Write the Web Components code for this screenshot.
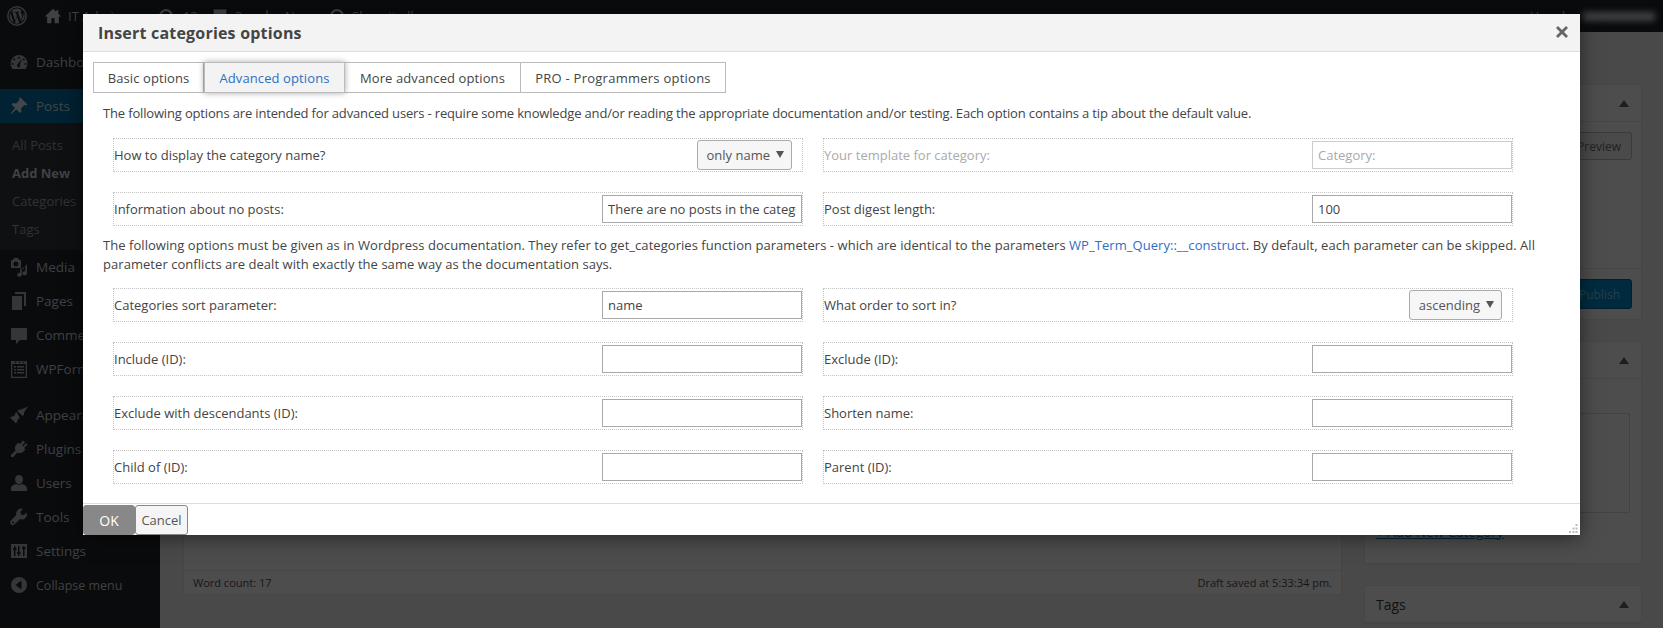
<!DOCTYPE html>
<html>
<head>
<meta charset="utf-8">
<title>Insert categories options</title>
<style>
  html, body { margin: 0; height: 100%; background: #494949; overflow: hidden; }
  body { font: 13px "Open Sans", sans-serif; position: relative; width: 1663px; height: 628px; }
</style>
</head>
<body>
<wp-page></wp-page>
<cat-dialog></cat-dialog>

<script>
const ICONS = {
    wp: '<circle cx="10" cy="10" r="9.2" fill="none" stroke="currentColor" stroke-width="1.5"/><path d="M2.6 10a7.4 7.4 0 0 0 4.2 6.7L3.3 7A7.4 7.4 0 0 0 2.6 10zM15 9.6c0-.9-.3-1.6-.6-2.1-.4-.6-.7-1.1-.7-1.7 0-.7.5-1.3 1.2-1.3h.1A7.4 7.4 0 0 0 3.8 5.9h.5c.8 0 2-.1 2-.1.4 0 .4.6 0 .6 0 0-.4.1-.9.1l2.8 8.4 1.7-5.1-1.2-3.3c-.4 0-.8-.1-.8-.1-.4 0-.4-.6 0-.6 0 0 1.300.1 2 .1.800 0 2-.1 2-.1.400 0 .4.600 0 .600 0 0-.4.100-.9.100l2.800 8.300.8-2.600c.3-1.100.6-1.900.6-2.600zM10.100 10.600l-2.300 6.700a7.400 7.400 0 0 0 4.500-.1l-.1-.1zM16.700 6.200c0 .3.100.6.100 1 0 .7-.1 1.500-.6 2.600l-2.200 6.500a7.400 7.400 0 0 0 2.700-10.100z" fill="currentColor"/>',
    home: '<path d="M10 2 1 10.500h2.500V18h4.700v-5.500h3.600V18h4.700v-7.500H19L16 7.600V3.500h-2.500v1.700z" fill="currentColor"/>',
    ring: '<circle cx="10" cy="10" r="6.500" fill="none" stroke="currentColor" stroke-width="2.500"/>',
    block: '<rect x="2" y="2" width="16" height="14" rx="1" fill="currentColor"/>',
    plus: '<path d="M9 2h2v7h7v2h-7v7H9v-7H2V9h7z" fill="currentColor"/>',
    gauge: '<path d="M10 3a8.500 8.500 0 0 0-8.500 8.500c0 2.100.8 4.100 2.100 5.500h12.800a8.500 8.500 0 0 0 2.100-5.500A8.500 8.500 0 0 0 10 3zm0 1.800a1 1 0 1 1 0 2 1 1 0 0 1 0-2zM5.200 6.500a1 1 0 1 1 0 2 1 1 0 0 1 0-2zM3.500 11a1 1 0 1 1 0 2 1 1 0 0 1 0-2zm13 0a1 1 0 1 1 0 2 1 1 0 0 1 0-2zm-1.700-4.500a1 1 0 1 1 0 2 1 1 0 0 1 0-2zM10 15.500a2 2 0 0 1-1-3.700l4-5-2.200 5.800a2 2 0 0 1-.800 2.900z" fill="currentColor" fill-rule="evenodd"/>',
    pin: '<path d="M11.500 1.500 18.500 8.500l-1.500 1-1.500-.5-3.500 3.500.5 3-1.500 1.500-3.500-3.500L2 18l-.5-.5 4.500-5.500L2.500 8.500 4 7l3 .5L10.500 4 10 2.500z" fill="currentColor"/>',
    media: '<path d="M2 3h2l1-2h4l1 2h2v8H2zm5 1.500a2.500 2.500 0 1 0 0 5 2.500 2.500 0 0 0 0-5zM18 7v9.200a2.300 2 0 1 1-1.700-1.900V10l-3.500 1v6.700a2.300 2 0 1 1-1.700-1.900V12h3z" fill="currentColor" fill-rule="evenodd"/>',
    pages: '<path d="M6 1h11v14h-2V3H6zM3 5h10v14H3z" fill="currentColor"/>',
    comment: '<path d="M3 3h14a1 1 0 0 1 1 1v10a1 1 0 0 1-1 1h-6l-4 4v-4H3a1 1 0 0 1-1-1V4a1 1 0 0 1 1-1z" fill="currentColor"/>',
    forms: '<path d="M2 2h16v17H2zm1.300 3v12.700h13.400V5zM5 7h2v1.500H5zm3 0h7v1.500H8zM5 10h2v1.500H5zm3 0h7v1.500H8zm-3 3h2v1.500H5zm3 0h7v1.500H8zM5 2.800l1.500 1.500L8 2.800zm4 0 1.500 1.500L12 2.800zm4 0 1.500 1.500L16 2.800z" fill="currentColor" fill-rule="evenodd"/>',
    brush: '<path d="M19 1.500 12 4.500l-2 0-1.500 1.500 5 5 1.500-1.500V7.500zM7.500 7 6 8.500c.500 1 0 1.800-1 2.200L1 12.500 7 18.500l2-4c.4-1 1.200-1.500 2.200-1z" fill="currentColor"/>',
    plug: '<path d="M14 1.500 16 3 13 6.500l1 1 3-3.500L18.500 5.500 15 9l1.500 1.500-2 2c-2 2-4.500 2-6 1L5 17l-.5 1H2v-2.500l1-.5 3.500-3.500c-1-1.500-1-4 1-6l2-2L11 5z" fill="currentColor"/>',
    user: '<path d="M10 2a4 4.500 0 1 1 0 9 4 4.500 0 0 1 0-9zM2 18v-2.500C2 13 5 11.500 7 11c1.500 1 4.500 1 6 0 2 .5 5 2 5 4.500V18z" fill="currentColor"/>',
    wrench: '<path d="M17.500 5.500 14.800 8.200 12 7.500 11.300 4.800 14 2a5 5 0 0 0-6.700 6L2 13.500a2.500 2.500 0 0 0 3.500 3.800L11 12a5 5 0 0 0 6.500-6.500zM4 16.500a1 1 0 1 1 0-2 1 1 0 0 1 0 2z" fill="currentColor" fill-rule="evenodd"/>',
    sliders: '<path d="M2 3h16v14H2zm3 2v2H4v2h1v6h1.500V9h1V7h-1V5zm4 0v6H8v2h1v2h1.500v-2h1v-2h-1V5zm5 0v1h-1v2h1v7h1.500V8h1V6h-1V5z" fill="currentColor" fill-rule="evenodd"/>',
    collapse: '<path d="M10 2a8 8 0 1 1 0 16 8 8 0 0 1 0-16zm2.500 3.500L6.500 10l6 4.500z" fill="currentColor" fill-rule="evenodd"/>'
};
const icon = (name, size = 20) => `<svg width="${size}" height="${size}" viewBox="0 0 20 20">${ICONS[name]}</svg>`;

class WpSideItem extends HTMLElement {
    connectedCallback() {
        this.attachShadow({ mode: 'open' }).innerHTML = `
            <style>
                :host { display: flex; align-items: center; height: 34px; color: #3f4245; font-size: 13.500px; }
                :host([active]) { background: #002233; color: #42474a; }
                :host([small]) { font-size: 12.500px; }
                .ic { width: 36px; padding-left: 9px; box-sizing: border-box; display: flex; color: #34373a; }
                :host([active]) .ic { color: #42474a; }
            </style>
            <span class="ic">${icon(this.getAttribute('icon'))}</span><slot></slot>`;
    }
}
customElements.define('wp-side-item', WpSideItem);

class WpSidebar extends HTMLElement {
    connectedCallback() {
        this.attachShadow({ mode: 'open' }).innerHTML = `
            <style>
                :host { display: block; width: 160px; flex: none; background: #0a0b0d; padding-top: 13px; box-sizing: border-box; }
                .sub { background: #0f1012; padding: 8px 0 0 12px; color: #303336; font-size: 13px; line-height: 28px; height: 127px; box-sizing: border-box; }
                .sub b { color: #3f4245; font-weight: 700; }
                .sep { height: 12px; }
            </style>
            <wp-side-item icon="gauge">Dashboard</wp-side-item>
            <div style="height:10px"></div>
            <wp-side-item icon="pin" active>Posts</wp-side-item>
            <div class="sub">All Posts<br><b>Add New</b><br>Categories<br>Tags</div>
            <wp-side-item icon="media">Media</wp-side-item>
            <wp-side-item icon="pages">Pages</wp-side-item>
            <wp-side-item icon="comment">Comments</wp-side-item>
            <wp-side-item icon="forms">WPForms</wp-side-item>
            <div class="sep"></div>
            <wp-side-item icon="brush">Appearance</wp-side-item>
            <wp-side-item icon="plug">Plugins</wp-side-item>
            <wp-side-item icon="user">Users</wp-side-item>
            <wp-side-item icon="wrench">Tools</wp-side-item>
            <wp-side-item icon="sliders">Settings</wp-side-item>
            <wp-side-item icon="collapse" small>Collapse menu</wp-side-item>`;
    }
}
customElements.define('wp-sidebar', WpSidebar);

class WpPanel extends HTMLElement {
    connectedCallback() {
        this.attachShadow({ mode: 'open' }).innerHTML = `
            <style>
                :host { display: block; background: #4d4d4d; border: 1px solid #464646; margin-bottom: 21px; box-sizing: border-box; color: #0c0c0c; }
                .head { height: 36px; border-bottom: 1px solid #464646; display: flex; align-items: center; justify-content: space-between; padding: 0 12px 0 11px; font-size: 14px; color: #111; }
                .head i { width: 0; height: 0; border: 5px solid transparent; border-bottom: 7px solid #1c1f22; border-top: 0; }
            </style>
            <div class="head"><span>${this.getAttribute('heading') || ''}</span><i></i></div>
            <slot></slot>`;
    }
}
customElements.define('wp-panel', WpPanel);

class WpPage extends HTMLElement {
    connectedCallback() {
        this.attachShadow({ mode: 'open' }).innerHTML = `
            <style>
                :host { display: flex; flex-direction: column; width: 1663px; height: 628px; overflow: hidden; }
                .bar { height: 32px; flex: none; background: #0a0b0d; color: #3f4245; display: flex; align-items: center; font-size: 13px; }
                .bar svg { display: block; }
                .bar > * { flex: none; }
                .slot { display: flex; align-items: center; }
                .howdy { margin-left: auto; margin-right: 8px; display: flex; align-items: center; }
                .blur { width: 72px; height: 9px; background: #3f4245; filter: blur(3px); margin-left: 8px; }
                .body { flex: 1; display: flex; min-height: 0; }
                .main { flex: 1; display: flex; padding: 52px 21px 0 23px; gap: 22px; align-items: flex-start; }
                .editor { flex: 1; height: 511px; border: 1px solid #464646; box-sizing: border-box; display: flex; flex-direction: column; justify-content: flex-end; background: #4d4d4d; }
                .status { height: 23px; border-top: 1px solid #464646; display: flex; justify-content: space-between; align-items: center; padding: 0 9px; font-size: 11px; color: #161616; }
                .side { width: 278px; flex: none; }
                .pub { height: 236px; position: relative; }
                .pubfoot { position: absolute; left: 0; right: 0; top: 183px; border-top: 1px solid #464646; }
                .btn { position: absolute; right: 9px; font-size: 12px; border-radius: 3px; height: 28px; box-sizing: border-box; padding: 0 10px; display: flex; align-items: center; border: 1px solid #3a3a3a; }
                .preview { top: 47px; color: #222; background: #4a4a4a; }
                .publish { top: 194px; height: 30px; color: #27404c; background: #002b3f; border-color: #001f2d; padding: 0 11px; }
                .cat { height: 223px; position: relative; }
                .list { position: absolute; left: 12px; right: 11px; top: 71px; height: 100px; border: 1px solid #434343; box-sizing: border-box; }
                .add { position: absolute; left: 11px; top: 181px; color: #002433; text-decoration: underline; font-size: 13.500px; }
            </style>
            <div class="bar">
                <span class="slot" style="margin-left:7px;color:#34373a">${icon('wp')}</span>
                <span class="slot" style="margin-left:17px;width:24px">${icon('home',18)}</span>
                <span class="slot" style="width:89px">IT Admin</span>
                <span class="slot" style="width:26px">${icon('ring',18)}</span>
                <span class="slot" style="width:29px">13</span>
                <span class="slot" style="width:23px">${icon('block',16)}</span>
                <span class="slot" style="width:25px">3</span>
                <span class="slot" style="width:25px">${icon('plus',14)}</span>
                <span class="slot" style="width:43px">New</span>
                <span class="slot" style="width:24px">${icon('ring',18)}</span>
                <span class="slot">Show it all</span>
                <span class="howdy">Howdy, <span class="blur"></span></span>
            </div>
            <div class="body">
                <wp-sidebar></wp-sidebar>
                <div class="main">
                    <div class="editor">
                        <div class="status"><span>Word count: 17</span><span>Draft saved at 5:33:34 pm.</span></div>
                    </div>
                    <div class="side">
                        <wp-panel heading="Publish" class="pub"><span class="btn preview">Preview</span><div class="pubfoot"></div><span class="btn publish">Publish</span></wp-panel>
                        <wp-panel heading="Categories" class="cat"><div class="list"></div><span class="add">+ Add New Category</span></wp-panel>
                        <wp-panel heading="Tags"></wp-panel>
                    </div>
                </div>
            </div>`;
    }
}
customElements.define('wp-page', WpPage);

class OptRow extends HTMLElement {
    connectedCallback() {
        this.attachShadow({ mode: 'open' }).innerHTML = `
            <style>
                :host { display: flex; align-items: center; justify-content: space-between; height: 34px; box-sizing: border-box; border: 1px dotted #c4c4c4; color: #444; font-size: 13px; }
                :host([disabled]) { color: #aaa; }
                .label { white-space: nowrap; }
                ::slotted(input) { width: 200px; height: 28px; box-sizing: border-box; border: 1px solid #a9a9a9; padding: 0 5px; margin: 0; background: #fff; color: #444; font: 13px "Open Sans", sans-serif; outline: 0; }
                ::slotted(input:disabled) { border-color: #ccc; color: #aaa; }
            </style>
            <span class="label">${this.getAttribute('label')}</span><slot></slot>`;
    }
}
customElements.define('opt-row', OptRow);

class OptSelect extends HTMLElement {
    connectedCallback() {
        this.attachShadow({ mode: 'open' }).innerHTML = `
            <style>
                :host { display: flex; align-items: center; gap: 6px; height: 30px; box-sizing: border-box; border: 1px solid #aaa; border-radius: 3px; background: #f6f6f6; padding: 0 7px 0 9px; color: #555; font-size: 13px; margin-right: 10px; }
                i { width: 0; height: 0; border: 4px solid transparent; border-top: 7px solid #555; border-bottom: 0; margin-top: -1px; }
            </style>
            <slot></slot><i></i>`;
    }
}
customElements.define('opt-select', OptSelect);

class CatDialog extends HTMLElement {
    connectedCallback() {
        this.attachShadow({ mode: 'open' }).innerHTML = `
            <style>
                :host { position: absolute; left: 83px; top: 14px; width: 1497px; height: 521px; background: #fff; box-shadow: 0 3px 18px rgba(0,0,0,.5); display: flex; flex-direction: column; color: #444; font-size: 13px; }
                .head { height: 36px; flex: none; background: #f3f3f3; border-bottom: 1px solid #ddd; display: flex; align-items: center; justify-content: space-between; padding: 1px 12px 0 15px; box-sizing: content-box; font-size: 16px; letter-spacing: .2px; font-weight: 700; color: #444; margin-bottom: -1px; }
                .x { color: #666; width: 12px; height: 12px; display: block; margin-top: -2px; }
                .tabs { display: flex; margin: 11px 0 0 10px; height: 31px; flex: none; }
                .tab { border: 1px solid #bbb; border-left-width: 0; display: flex; align-items: center; justify-content: center; color: #444; background: #fff; box-sizing: border-box; letter-spacing: .1px; }
                .tab:first-child { border-left-width: 1px; }
                .tab.on { color: #2b6fc4; background: #f3f3f3; box-shadow: 0 0 6px rgba(0,0,0,.35); position: relative; border-left: 1px solid #bbb; }
                p { margin: 0; padding: 0 20px; line-height: 19px; }
                p a { color: #2b6fc4; text-decoration: none; }
                .p1 { margin: 11px 0 15px; letter-spacing: -.16px; }
                .p2 { margin: 10px 0 14px; letter-spacing: .05px; }
                .grid { display: grid; grid-template-columns: 690px 690px; column-gap: 20px; row-gap: 20px; margin-left: 30px; }
                .foot { margin-top: auto; height: 31px; flex: none; border-top: 1px solid #ddd; display: flex; align-items: flex-end; position: relative; }
                .b { height: 30px; box-sizing: border-box; border: 1px solid #888; border-radius: 3px; display: flex; align-items: center; justify-content: center; }
                .ok { width: 52px; background: #888; color: #fff; font-size: 14px; }
                .cancel { width: 53px; background: #f5f5f5; color: #555; }
                .grip { position: absolute; right: 2px; bottom: 2px; }
            </style>
            <div class="head"><span>Insert categories options</span>
                <svg class="x" viewBox="0 0 12 12"><path d="M2 0 6 4 10 0 12 2 8 6 12 10 10 12 6 8 2 12 0 10 4 6 0 2z" fill="currentColor"/></svg>
            </div>
            <div class="tabs">
                <div class="tab" style="width:111px">Basic options</div>
                <div class="tab on" style="width:141px">Advanced options</div>
                <div class="tab" style="width:176px">More advanced options</div>
                <div class="tab" style="width:205px;letter-spacing:.25px">PRO - Programmers options</div>
            </div>
            <p class="p1">The following options are intended for advanced users - require some knowledge and/or reading the appropriate documentation and/or testing. Each option contains a tip about the default value.</p>
            <div class="grid">
                <opt-row label="How to display the category name?"><opt-select>only name</opt-select></opt-row>
                <opt-row label="Your template for category:" disabled><input value="Category:" disabled></opt-row>
                <opt-row label="Information about no posts:"><input value="There are no posts in the category"></opt-row>
                <opt-row label="Post digest length:"><input value="100"></opt-row>
            </div>
            <p class="p2">The following options must be given as in Wordpress documentation. They refer to get_categories function parameters - which are identical to the parameters <a>WP_Term_Query::__construct</a>. By default, each parameter can be skipped. All parameter conflicts are dealt with exactly the same way as the documentation says.</p>
            <div class="grid">
                <opt-row label="Categories sort parameter:"><input value="name"></opt-row>
                <opt-row label="What order to sort in?"><opt-select>ascending</opt-select></opt-row>
                <opt-row label="Include (ID):"><input></opt-row>
                <opt-row label="Exclude (ID):"><input></opt-row>
                <opt-row label="Exclude with descendants (ID):"><input></opt-row>
                <opt-row label="Shorten name:"><input></opt-row>
                <opt-row label="Child of (ID):"><input></opt-row>
                <opt-row label="Parent (ID):"><input></opt-row>
            </div>
            <div class="foot">
                <div class="b ok">OK</div><div class="b cancel">Cancel</div>
                <svg class="grip" width="9" height="9" viewBox="0 0 9 9" fill="#bbb"><rect x="6.500" y="0" width="2" height="2"/><rect x="3.500" y="3.500" width="2" height="2"/><rect x="6.500" y="3.500" width="2" height="2"/><rect x="0" y="7" width="2" height="2"/><rect x="3.500" y="7" width="2" height="2"/><rect x="6.500" y="7" width="2" height="2"/></svg>
            </div>`;
    }
}
customElements.define('cat-dialog', CatDialog);
</script>
</body>
</html>
